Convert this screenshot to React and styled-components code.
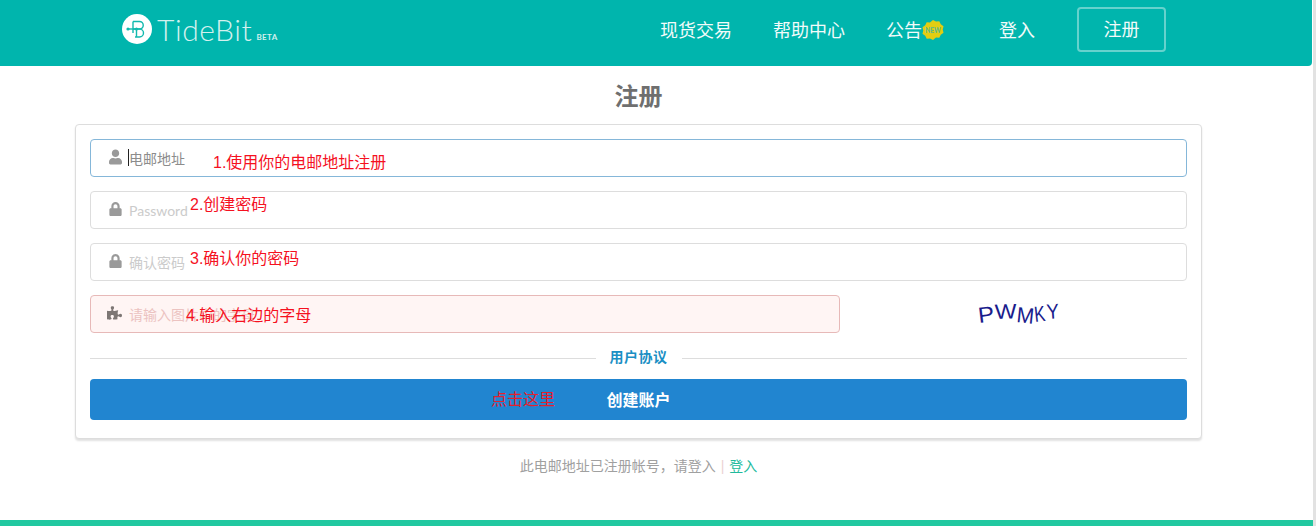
import React from 'react';
import styled, { createGlobalStyle } from 'styled-components';
import { FaUser, FaLock, FaPuzzlePiece } from 'react-icons/fa';

const CJK = '"Liberation Sans", "Noto Sans CJK SC", sans-serif';

const GlobalStyle = createGlobalStyle`
  html, body {
    margin: 0;
    padding: 0;
    background: #fff;
    overflow: hidden;
  }
  body {
    font-family: ${CJK};
  }
  * {
    box-sizing: border-box;
  }
`;

const Page = styled.div`
  width: 1316px;
  height: 526px;
  display: flex;
  flex-direction: column;
  border-right: 3px solid #e2e2e2;
  overflow: hidden;
`;

const Header = styled.header`
  height: 66px;
  flex: none;
  width: 1312px;
  display: flex;
  align-items: center;
  padding: 0 146px 8px 122px;
  background: #00b5ad;
  border-bottom-right-radius: 4px;
`;

const Logo = styled.a`
  display: flex;
  align-items: flex-start;
  color: #d3f1ee;
`;

const LogoName = styled.span`
  margin-left: 5px;
  font-family: Lato, sans-serif;
  font-weight: 300;
  font-size: 30px;
  line-height: 30px;
  letter-spacing: 0.6px;
`;

const LogoBeta = styled.span`
  margin: 18px 0 0 4px;
  font-family: Lato, sans-serif;
  font-weight: 700;
  font-size: 8px;
  line-height: 10px;
  letter-spacing: 0.4px;
`;

const Nav = styled.nav`
  margin-left: auto;
  display: flex;
  align-items: center;
`;

const NavItem = styled.a`
  display: flex;
  align-items: center;
  margin-left: ${p => p.$gap}px;
  padding-top: 4px;
  font-size: 18px;
  line-height: 26px;
  color: #f2fbfa;
`;

const NavButton = styled(NavItem)`
  justify-content: center;
  width: 89px;
  height: 45px;
  padding-top: 2px;
  border: 2px solid #66d2cd;
  border-radius: 4px;
`;

const NewBadge = styled.svg`
  width: 22px;
  height: 22px;
  margin-top: -3px;
`;

const Main = styled.main`
  width: 1127px;
  margin-left: 75px;
`;

const Title = styled.h1`
  height: 58px;
  margin: 0;
  padding-top: 15px;
  text-align: center;
  font-size: 24px;
  line-height: 32px;
  font-weight: 700;
  color: #6f6f6f;
`;

const Card = styled.form`
  display: flex;
  flex-direction: column;
  gap: 14px;
  height: 315px;
  padding: 14px 14px 0;
  background: #fff;
  border: 1px solid #ddd;
  border-radius: 4px;
  box-shadow: 0 2px 2px rgba(0, 0, 0, 0.12);
`;

const Row = styled.div`
  display: flex;
`;

const Field = styled.label`
  position: relative;
  display: flex;
  align-items: center;
  flex: ${p => (p.$width ? `0 0 ${p.$width}px` : 'none')};
  height: 38px;
  padding-left: ${p => p.$iconLeft || 18}px;
  background: ${p => (p.$error ? '#fff5f4' : '#fff')};
  border: 1px solid ${p => (p.$error ? '#e7b9b8' : p.$focus ? '#85b7d9' : '#ddd')};
  border-radius: 4px;
  color: ${p => (p.$error ? '#7d7674' : '#9a9a9a')};
  font-size: 14px;
`;

const FieldIcon = styled.span`
  display: flex;
  justify-content: center;
  flex: none;
  width: ${p => p.$width}px;
  margin-top: -3px;
`;

const Input = styled.input`
  flex: 1;
  min-width: 0;
  margin-left: 7px;
  padding: 2px 0 0;
  border: 0;
  outline: 0;
  background: transparent;
  font-family: Lato, "Noto Sans CJK SC", sans-serif;
  font-size: 14px;
  line-height: 20px;

  &::placeholder {
    color: ${p => p.$hint};
    opacity: 1;
  }
`;

const Caret = styled.span`
  position: absolute;
  left: 37px;
  top: 9px;
  width: 1px;
  height: 17px;
  background: #222;
`;

const Note = styled.span`
  position: absolute;
  left: ${p => p.$left}px;
  top: ${p => p.$top}px;
  font-size: 16px;
  font-weight: 400;
  line-height: 20px;
  color: ${p => p.$color || '#f5111f'};
  white-space: nowrap;
  pointer-events: none;
`;

const Captcha = styled.div`
  flex: 1;
  display: flex;
  justify-content: center;
  align-items: center;
  padding-left: 13px;
`;

const CaptchaText = styled.text`
  font-family: "Liberation Sans", sans-serif;
  font-size: 22px;
  fill: #1a1c8c;
`;

const Agreement = styled.div`
  display: flex;
  align-items: center;
  gap: 14px;
  height: 18px;
  font-size: 14px;
  font-weight: 700;
  letter-spacing: 0.5px;
  color: #1b8fc4;

  &::before,
  &::after {
    content: '';
    flex: 1;
    height: 1px;
    margin-top: 4px;
    background: #ddd;
  }
`;

const Submit = styled.button`
  position: relative;
  height: 41px;
  padding: 0 0 2px;
  border: 0;
  border-radius: 4px;
  background: #2185d0;
  color: #fff;
  font-family: ${CJK};
  font-size: 16px;
  font-weight: 700;
`;

const Already = styled.p`
  margin: 17px 0 0;
  text-align: center;
  font-size: 14px;
  line-height: 20px;
  color: #a0a0a0;
`;

const Divider = styled.span`
  margin: 0 5px;
  color: #ecd2d2;
`;

const LoginLink = styled.a`
  color: #21ba9c;
`;

const FooterBar = styled.div`
  flex: none;
  height: 6px;
  margin-top: auto;
  background: #21c8a0;
`;

function LogoMark() {
  return (
    <svg width="30" height="30" viewBox="0 0 30 30">
      <circle cx="15" cy="15" r="15" fill="#fff" />
      <g fill="none" stroke="#12b9ae" strokeWidth="1.4">
        <path d="M11 7.500h6.500a3.700 3.700 0 0 1 0 7.500H11M17.500 15a4 4 0 0 1 0 8H13" />
        <path d="M11 7.500V19M14.500 15V23" />
        <path d="M6 15h12" />
      </g>
      <circle cx="6" cy="15" r="1.600" fill="#12b9ae" />
      <circle cx="14.500" cy="15" r="1.600" fill="#12b9ae" />
    </svg>
  );
}

const fields = [
  { key: 'email', icon: <FaUser size={16} />, hint: '电邮地址', hintColor: '#8c8c8c', focus: true, note: '1.使用你的电邮地址注册', noteLeft: 122, noteTop: 13 },
  { key: 'password', icon: <FaLock size={14} />, hint: 'Password', hintColor: '#cbcbcb', note: '2.创建密码', noteLeft: 99, noteTop: 3 },
  { key: 'confirm', icon: <FaLock size={14} />, hint: '确认密码', hintColor: '#cbcbcb', note: '3.确认你的密码', noteLeft: 99, noteTop: 5 },
];

export default function App() {
  return (
    <Page>
      <GlobalStyle />
      <Header>
        <Logo>
          <LogoMark />
          <LogoName>TideBit</LogoName>
          <LogoBeta>BETA</LogoBeta>
        </Logo>
        <Nav>
          <NavItem $gap={0}>现货交易</NavItem>
          <NavItem $gap={41}>帮助中心</NavItem>
          <NavItem $gap={41}>
            公告
            <NewBadge viewBox="0 0 22 22">
              <path
                d="M11 1l3 1.500 3.300-.2 1.500 3 2.700 2-.8 3.200.8 3.200-2.700 2-1.500 3-3.300-.2L11 21l-3-1.500-3.300.2-1.500-3-2.700-2 .8-3.200-.8-3.200 2.700-2 1.500-3 3.300.2z"
                fill="#e3cd12"
              />
              <text x="11" y="13.500" textAnchor="middle" fontSize="6.500" fontWeight="700" fill="#5cb98a" fontFamily="Lato, sans-serif">
                NEW
              </text>
            </NewBadge>
          </NavItem>
          <NavItem $gap={55}>登入</NavItem>
          <NavButton $gap={42}>注册</NavButton>
        </Nav>
      </Header>
      <Main>
        <Title>注册</Title>
        <Card onSubmit={e => e.preventDefault()}>
          {fields.map(field => (
            <Field key={field.key} $focus={field.focus}>
              <FieldIcon $width={13}>{field.icon}</FieldIcon>
              <Input $hint={field.hintColor} placeholder={field.hint} />
              {field.focus && <Caret />}
              <Note $left={field.noteLeft} $top={field.noteTop}>{field.note}</Note>
            </Field>
          ))}
          <Row>
            <Field $width={750} $error $iconLeft={16}>
              <FieldIcon $width={15}><FaPuzzlePiece size={16} /></FieldIcon>
              <Input $hint="#ecc3c1" placeholder="请输入图片中的字母" />
              <Note $left={95} $top={10}>4.输入右边的字母</Note>
            </Field>
            <Captcha>
              <svg width="90" height="34" viewBox="0 0 90 34">
                <CaptchaText transform="translate(4 26) rotate(-7) scale(1.1 1)">P</CaptchaText>
                <CaptchaText transform="translate(20 22) rotate(-2) scale(1.05 0.95)">W</CaptchaText>
                <CaptchaText transform="translate(41 25) rotate(6) scale(0.95 1)">M</CaptchaText>
                <CaptchaText transform="translate(60 25) rotate(-6) scale(0.75 1)">K</CaptchaText>
                <CaptchaText transform="translate(72 22) rotate(-4) scale(0.85 0.95)">Y</CaptchaText>
              </svg>
            </Captcha>
          </Row>
          <Agreement>用户协议</Agreement>
          <Submit type="submit">
            创建账户
            <Note $left={401} $top={11} $color="#e4202c">点击这里</Note>
          </Submit>
        </Card>
        <Already>
          此电邮地址已注册帐号，请登入
          <Divider>|</Divider>
          <LoginLink>登入</LoginLink>
        </Already>
      </Main>
      <FooterBar />
    </Page>
  );
}
